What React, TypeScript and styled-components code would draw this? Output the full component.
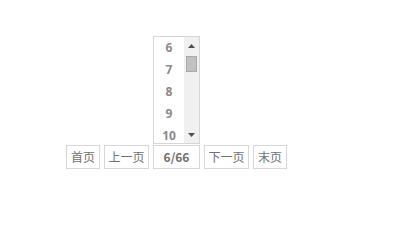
import styled, { createGlobalStyle } from "styled-components";

const GlobalStyle = createGlobalStyle`
  body {
    margin: 0;
    background: #ffffff;
    font-family: "Noto Sans CJK SC", "Noto Sans", sans-serif;
  }
`;

const Page = styled.div`
  width: 410px;
  height: 240px;
  padding: 145px 0 0 66px;
  box-sizing: border-box;
`;

const Pager = styled.div`
  display: flex;
  align-items: flex-start;
  gap: 4px;
`;

const PageButton = styled.div<{ $width: number; $bold?: boolean }>`
  position: relative;
  width: ${(p) => p.$width}px;
  height: 24px;
  box-sizing: border-box;
  border: 1px solid #d6d6d6;
  background: #ffffff;
  color: #707070;
  font-size: 12px;
  font-weight: ${(p) => (p.$bold ? 700 : 400)};
  display: flex;
  align-items: center;
  justify-content: center;
  line-height: 1;
`;

const ListBox = styled.div`
  position: absolute;
  left: -1px;
  bottom: calc(100% + 2px);
  width: 47px;
  height: 108px;
  box-sizing: border-box;
  border: 1px solid #d6d6d6;
  background: #ffffff;
  display: flex;
  overflow: hidden;
`;

const Options = styled.div`
  flex: 1;
  display: flex;
  flex-direction: column;
`;

const Option = styled.div`
  height: 22px;
  flex-shrink: 0;
  display: flex;
  align-items: center;
  justify-content: center;
  font-family: "Open Sans", "Noto Sans", sans-serif;
  font-size: 12px;
  font-weight: 700;
  color: #8a8a8a;
`;

const Scrollbar = styled.div`
  width: 15px;
  background: #f0f0f0;
  display: flex;
  flex-direction: column;
  align-items: center;
`;

const Arrow = styled.div<{ $down?: boolean }>`
  width: 15px;
  height: 17px;
  display: flex;
  align-items: center;
  justify-content: center;
  margin-top: ${(p) => (p.$down ? "auto" : "0")};
`;

const Thumb = styled.div`
  width: 11px;
  height: 16px;
  margin-top: 2px;
  box-sizing: border-box;
  background: #c1c1c1;
  border: 1px solid #a8a8a8;
`;

const Triangle = ({ down }: { down?: boolean }) => (
  <svg width="7" height="4" viewBox="0 0 7 4">
    <polygon points={down ? "0,0 7,0 3.5,4" : "0,4 7,4 3.5,0"} fill="#505050" />
  </svg>
);

export default function App() {
  const options = [6, 7, 8, 9, 10];
  return (
    <Page>
      <GlobalStyle />
      <Pager>
        <PageButton $width={34}>首页</PageButton>
        <PageButton $width={45}>上一页</PageButton>
        <PageButton $width={47} $bold>
          6/66
          <ListBox>
            <Options>
              {options.map((n) => (
                <Option key={n}>{n}</Option>
              ))}
            </Options>
            <Scrollbar>
              <Arrow>
                <Triangle />
              </Arrow>
              <Thumb />
              <Arrow $down>
                <Triangle down />
              </Arrow>
            </Scrollbar>
          </ListBox>
        </PageButton>
        <PageButton $width={45}>下一页</PageButton>
        <PageButton $width={34}>末页</PageButton>
      </Pager>
    </Page>
  );
}
